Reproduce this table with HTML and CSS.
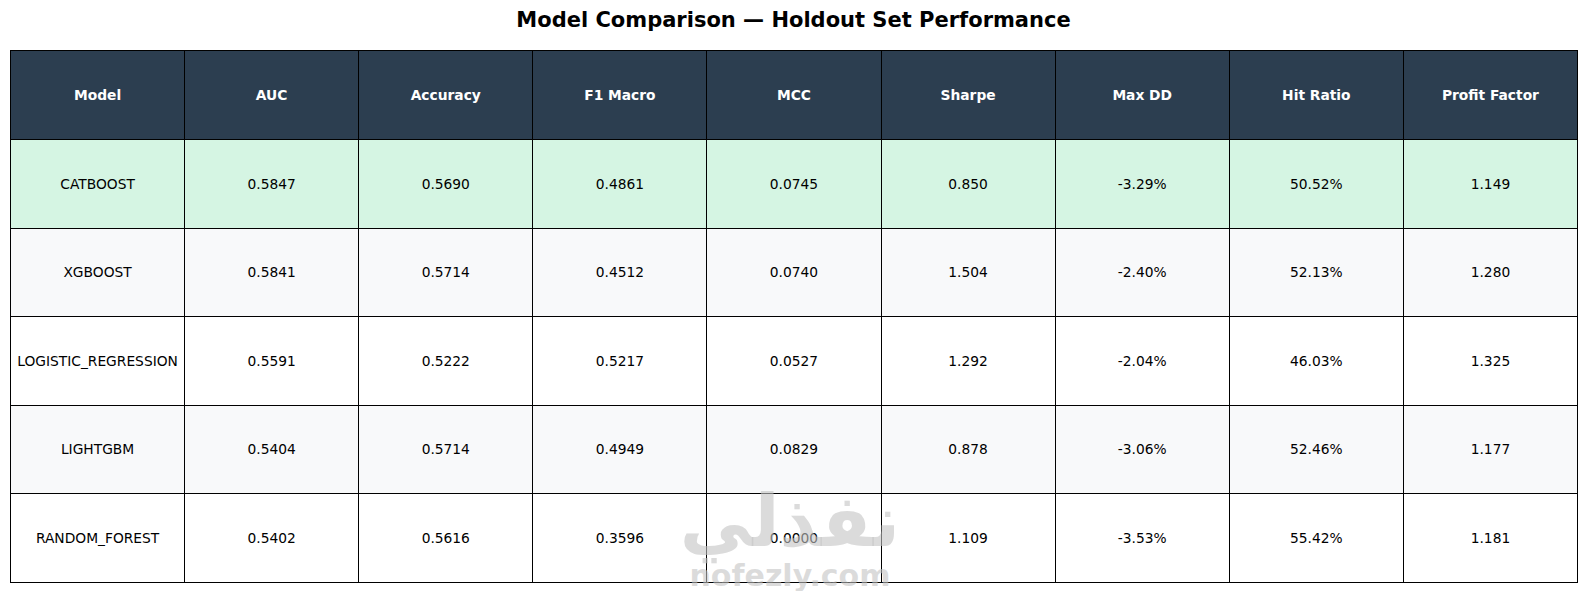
FILE: index.html
```html
<!DOCTYPE html>
<html lang="en">
<head>
<meta charset="utf-8">
<title>Model Comparison</title>
<link rel="stylesheet" href="styles.css">
</head>
<body>
<div class="page">
  <h1 class="title">Model Comparison — Holdout Set Performance</h1>
  <table class="grid">
    <thead>
      <tr>
        <th>Model</th><th>AUC</th><th>Accuracy</th><th>F1 Macro</th><th>MCC</th><th>Sharpe</th><th>Max DD</th><th>Hit Ratio</th><th>Profit Factor</th>
      </tr>
    </thead>
    <tbody>
      <tr class="best">
        <td>CATBOOST</td><td>0.5847</td><td>0.5690</td><td>0.4861</td><td>0.0745</td><td>0.850</td><td>-3.29%</td><td>50.52%</td><td>1.149</td>
      </tr>
      <tr class="alt">
        <td>XGBOOST</td><td>0.5841</td><td>0.5714</td><td>0.4512</td><td>0.0740</td><td>1.504</td><td>-2.40%</td><td>52.13%</td><td>1.280</td>
      </tr>
      <tr>
        <td>LOGISTIC_REGRESSION</td><td>0.5591</td><td>0.5222</td><td>0.5217</td><td>0.0527</td><td>1.292</td><td>-2.04%</td><td>46.03%</td><td>1.325</td>
      </tr>
      <tr class="alt">
        <td>LIGHTGBM</td><td>0.5404</td><td>0.5714</td><td>0.4949</td><td>0.0829</td><td>0.878</td><td>-3.06%</td><td>52.46%</td><td>1.177</td>
      </tr>
      <tr>
        <td>RANDOM_FOREST</td><td>0.5402</td><td>0.5616</td><td>0.3596</td><td>0.0000</td><td>1.109</td><td>-3.53%</td><td>55.42%</td><td>1.181</td>
      </tr>
    </tbody>
  </table>
  <div class="watermark" aria-hidden="true">
    <div class="wm-ar">نفذلي</div>
    <div class="wm-en">nofezly.com</div>
  </div>
</div>
</body>
</html>
```

FILE: styles.css
```css
html, body {
  margin: 0;
  padding: 0;
  background: #ffffff;
}

.page {
  position: relative;
  width: 1587px;
  height: 591px;
  overflow: hidden;
  font-family: "DejaVu Sans", "Liberation Sans", sans-serif;
}

.title {
  margin: 0;
  padding-top: 8px;
  height: 25px;
  line-height: 25px;
  font-size: 21px;
  font-weight: bold;
  text-align: center;
  color: #000000;
  margin-bottom: 17px;
}

.grid {
  margin-left: 10px;
  width: 1568px;
  table-layout: fixed;
  border-collapse: collapse;
  font-size: 13.8px;
  color: #000000;
}

.grid th,
.grid td {
  border: 1.3px solid #000000;
  text-align: center;
  vertical-align: middle;
  padding: 0;
  white-space: nowrap;
}

.grid th {
  height: 88px;
  background: #2c3e50;
  color: #ffffff;
  font-weight: bold;
}

.grid td {
  height: 87.5px;
  background: #ffffff;
}

.grid tr.best td {
  background: #d5f5e3;
}

.grid tr.alt td {
  background: #f8f9fa;
}

.watermark {
  position: absolute;
  left: 680px;
  top: 481px;
  width: 220px;
  text-align: center;
  color: rgba(195, 195, 195, 0.6);
  font-family: "DejaVu Sans", sans-serif;
  font-weight: bold;
  pointer-events: none;
}

.wm-ar {
  font-size: 72px;
  line-height: 80px;
  direction: rtl;
}

.wm-en {
  font-size: 30px;
  line-height: 34px;
  margin-top: -2px;
}
```
